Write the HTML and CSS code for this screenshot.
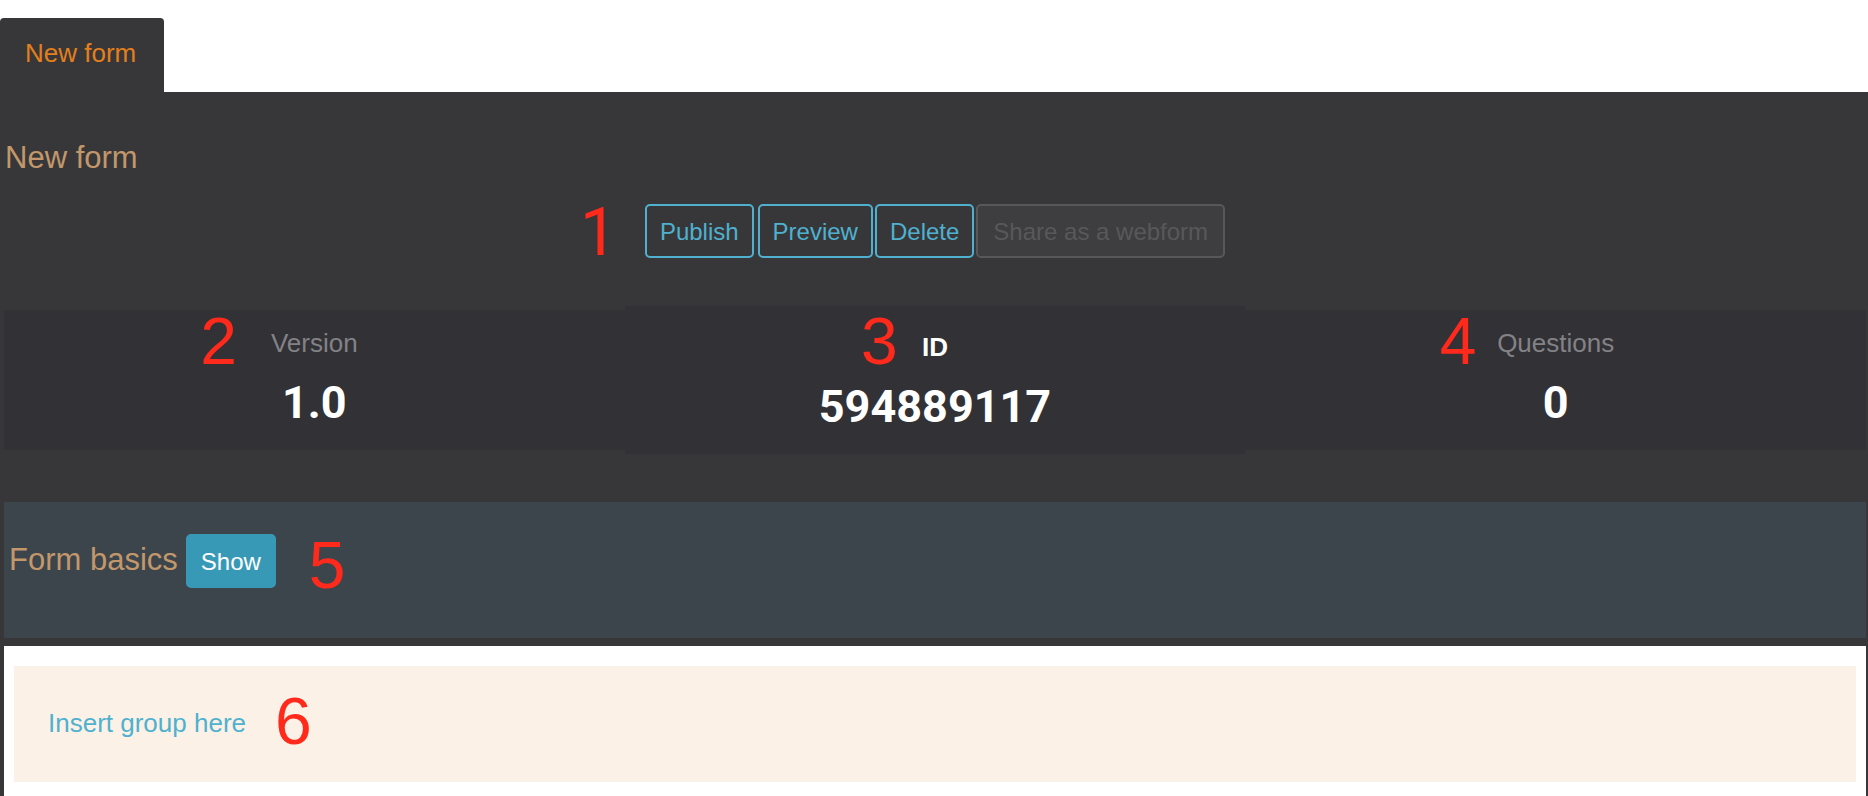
FILE: index.html
```html
<!DOCTYPE html>
<html lang="en">
<head>
<meta charset="utf-8">
<title>New form</title>
<link rel="stylesheet" href="styles.css">
</head>
<body>
<nav class="tabs"><a class="tab" href="#form">New form</a></nav>
<main class="panel" id="form">
  <h1 class="heading title">New form</h1>
  <div class="toolbar">
    <div class="actions">
      <span class="marker marker-actions">1</span>
      <button class="btn btn-publish" type="button">Publish</button>
      <button class="btn" type="button">Preview</button>
      <button class="btn" type="button">Delete</button>
      <button class="btn btn-share" type="button" disabled>Share as a webform</button>
    </div>
  </div>
  <dl class="stats">
    <div class="stat">
      <span class="marker marker-version">2</span>
      <dt class="stat-label">Version</dt>
      <dd class="stat-value">1.0</dd>
    </div>
    <div class="stat stat-main">
      <span class="marker marker-id">3</span>
      <dt class="stat-label">ID</dt>
      <dd class="stat-value">594889117</dd>
    </div>
    <div class="stat">
      <span class="marker marker-questions">4</span>
      <dt class="stat-label">Questions</dt>
      <dd class="stat-value">0</dd>
    </div>
  </dl>
  <section class="basics">
    <h2 class="heading">Form basics</h2>
    <div class="anchor">
      <button class="btn btn-solid" type="button">Show</button>
      <span class="marker marker-basics">5</span>
    </div>
  </section>
  <section class="groups">
    <div class="insert">
      <div class="anchor">
        <a class="insert-link" href="#insert">Insert group here</a>
        <span class="marker marker-insert">6</span>
      </div>
    </div>
  </section>
</main>
</body>
</html>
```

FILE: styles.css
```css
* {
  box-sizing: border-box;
}

body {
  margin: 0;
  background: #fff;
  font-family: "Liberation Sans", Arial, sans-serif;
  font-size: 26px;
  line-height: 36px;
  overflow: hidden;
}

a {
  text-decoration: none;
}

.tabs {
  display: flex;
  padding-top: 18px;
}

.tab {
  padding: 17px 28px 21px 25px;
  border-radius: 4px 4px 0 0;
  background: #373739;
  color: #e37f1c;
}

.panel {
  padding: 46px 2px 0 4px;
  background: #373739;
}

.heading {
  margin: 0;
  color: #c2976b;
  font-size: 31px;
  font-weight: 400;
  line-height: 40px;
}

.title {
  padding-left: 1px;
}

.toolbar {
  display: flex;
  justify-content: center;
  margin-top: 26px;
}

.actions {
  position: relative;
  display: flex;
  gap: 2px;
}

.btn {
  height: 54px;
  padding: 2px 13px 0;
  border: 2px solid #4fb1cf;
  border-radius: 5px;
  background: transparent;
  color: #4fb1cf;
  font-family: inherit;
  font-size: 24px;
}

.btn:disabled {
  border-color: #58585a;
  background: #3e3e40;
  color: #58585a;
}

.btn-publish {
  margin-right: 2px;
}

.btn-share {
  padding: 2px 15px 0;
}

.btn-solid {
  border-color: #3899b7;
  background: #3899b7;
  color: #fff;
}

.stats {
  display: grid;
  grid-template-columns: repeat(3, 1fr);
  align-items: center;
  margin: 48px 0;
}

.stat {
  position: relative;
  padding: 15px 0 22px;
  background: #323136;
  text-align: center;
}

.stat-main {
  padding: 23px 0 22px;
}

.stat-label {
  color: #838286;
}

.stat-main .stat-label {
  color: #fff;
  font-weight: 700;
}

.stat-value {
  margin: 17px 0 0;
  color: #fff;
  font-family: Roboto, "Liberation Sans", sans-serif;
  font-size: 45px;
  font-weight: 700;
  line-height: 50px;
}

.basics {
  display: flex;
  align-items: baseline;
  gap: 8px;
  padding: 32px 5px 50px;
  background: #3b454b;
}

.anchor {
  position: relative;
}

.groups {
  margin-top: 8px;
  padding: 20px 10px;
  background: #fff;
}

.insert {
  display: flex;
  padding: 39px 34px 41px;
  background: #fcf1e6;
}

.insert-link {
  color: #4fb1cf;
}

.marker {
  position: absolute;
  color: #ff2a1c;
  font-size: 66px;
  font-weight: 400;
  line-height: 66px;
}

.marker-actions {
  top: -4px;
  left: -65px;
  font-family: Roboto, "Liberation Sans", sans-serif;
}

.marker-version {
  top: -2px;
  left: calc(50% - 114px);
}

.marker-id {
  top: 2px;
  left: calc(50% - 74px);
}

.marker-questions {
  top: -2px;
  left: calc(50% - 116px);
}

.marker-basics {
  top: -2px;
  left: 123px;
}

.marker-insert {
  top: -17px;
  left: 227px;
}
```
